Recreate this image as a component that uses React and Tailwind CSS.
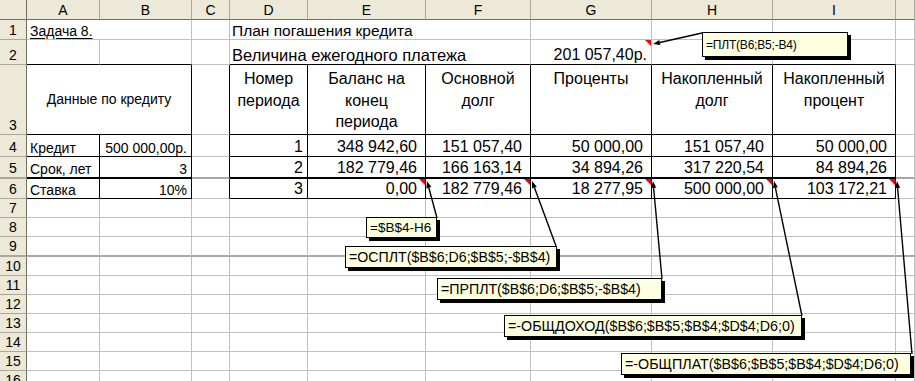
import React from "react";

const RB = { g: "border-r-[#c0c0c0]", k: "border-r-black", n: "border-r-transparent" };
const BB = { g: "border-b-[#c0c0c0]", k: "border-b-black", t: "border-b-[#a8a8a8]" };

function Cell({ r = "g", b = "g", className = "", children }) {
  return (
    <div className={`relative flex whitespace-nowrap border-r border-b ${RB[r]} ${BB[b]} ${className}`}>
      {children}
    </div>
  );
}

function RowHead({ n, className = "" }) {
  return (
    <div className={`flex items-end justify-center bg-[#ece9d8] border-r border-b border-r-[#716f64] border-b-[#aca899] text-[14px] leading-[18px] ${className}`}>
      {n}
    </div>
  );
}

function ColHead({ l }) {
  return (
    <div className="flex items-center justify-center bg-[#ece9d8] border-r border-b border-r-[#aca899] border-b-[#716f64] text-[14px] leading-none">
      {l}
    </div>
  );
}

const num = "items-end justify-end pr-[8px] text-[16px] leading-[18px]";
const ab = "items-end pl-[3px] text-[14px] leading-[16px]";
const abn = "items-end justify-end pr-[4px] text-[14px] leading-[16px]";
const head = "flex-col items-center justify-start pt-[3px] text-[16px] leading-[21.5px] text-center";
const note = "absolute flex items-center pl-[3px] bg-[#ffffe1] border border-black shadow-[3px_3px_0_#000] leading-none whitespace-nowrap";

function Arrow({ x1, y1, x2, y2 }) {
  const dx = x2 - x1;
  const dy = y2 - y1;
  const len = Math.hypot(dx, dy);
  const ux = dx / len;
  const uy = dy / len;
  const bx = x2 - ux * 7;
  const by = y2 - uy * 7;
  const px = -uy * 2.5;
  const py = ux * 2.5;
  return (
    <g>
      <line x1={x1} y1={y1} x2={bx} y2={by} stroke="#000" strokeWidth="1.4" />
      <polygon points={`${x2},${y2} ${bx + px},${by + py} ${bx - px},${by - py}`} fill="#000" />
    </g>
  );
}

const marks = [
  [651, 40],
  [425, 179],
  [530, 179],
  [651, 179],
  [772, 179],
  [895, 179],
];

const emptyRows = [7, 8, 9, 10, 11, 12, 13, 14, 15, 16];

export default function App() {
  return (
    <div className="relative w-[915px] h-[381px] overflow-hidden bg-white text-black font-['Liberation_Sans',Arial,sans-serif]">
      <div className="grid grid-cols-[27px_73px_92px_38px_78px_118px_105px_121px_121px_123px_1fr] grid-rows-[20px_20px_25px_70px_22px_22px_20px_19px_19px_20px_19px_19px_19px_19px_19px_19px_19px]">
        {/* column headers */}
        <div className="bg-[#ece9d8] border-r border-b border-r-[#716f64] border-b-[#716f64]" />
        {["A", "B", "C", "D", "E", "F", "G", "H", "I", ""].map((l, i) => (
          <ColHead key={i} l={l} />
        ))}

        {/* row 1 */}
        <RowHead n="1" />
        <Cell className={`col-span-2 ${ab}`}>
          <span className="underline underline-offset-2">Задача 8.</span>
        </Cell>
        <Cell />
        <Cell className="col-span-3 items-end pl-[2px] text-[15.5px] leading-[16px]">План погашения кредита</Cell>
        <Cell />
        <Cell />
        <Cell />
        <Cell />

        {/* row 2 */}
        <RowHead n="2" />
        <Cell b="k" />
        <Cell b="k" />
        <Cell />
        <Cell b="k" className="col-span-3 items-end pl-[2px] text-[16.5px] leading-[18px]">
          Величина ежегодного платежа
        </Cell>
        <Cell b="k" className="items-end justify-end pr-[4px] text-[16px] leading-[18px]">
          201 057,40р.
        </Cell>
        <Cell b="k" />
        <Cell b="k" />
        <Cell />

        {/* row 3 */}
        <RowHead n="3" />
        <Cell r="k" b="k" className="col-span-2 items-center justify-center text-[14px]">
          Данные по кредиту
        </Cell>
        <Cell r="k" />
        <Cell r="k" b="k" className={head}>
          <span>Номер</span>
          <span>периода</span>
        </Cell>
        <Cell r="k" b="k" className={head}>
          <span>Баланс на</span>
          <span>конец</span>
          <span>периода</span>
        </Cell>
        <Cell r="k" b="k" className={head}>
          <span>Основной</span>
          <span>долг</span>
        </Cell>
        <Cell r="k" b="k" className={head}>
          <span>Проценты</span>
        </Cell>
        <Cell r="k" b="k" className={head}>
          <span>Накопленный</span>
          <span>долг</span>
        </Cell>
        <Cell r="k" b="k" className={head}>
          <span>Накопленный</span>
          <span>процент</span>
        </Cell>
        <Cell />

        {/* row 4 */}
        <RowHead n="4" />
        <Cell r="k" b="k" className={ab}>Кредит</Cell>
        <Cell r="k" b="k" className={abn}>500 000,00р.</Cell>
        <Cell r="k" />
        <Cell r="k" b="k" className="items-end justify-end pr-[4px] text-[16px] leading-[18px]">1</Cell>
        <Cell r="k" b="k" className={num}>348 942,60</Cell>
        <Cell r="k" b="k" className={num}>151 057,40</Cell>
        <Cell r="k" b="k" className={num}>50 000,00</Cell>
        <Cell r="k" b="k" className={num}>151 057,40</Cell>
        <Cell r="k" b="k" className={num}>50 000,00</Cell>
        <Cell />

        {/* row 5 */}
        <RowHead n="5" className="border-b-2" />
        <Cell r="k" b="k" className={`border-b-2 ${ab}`}>Срок, лет</Cell>
        <Cell r="k" b="k" className={`border-b-2 ${abn}`}>3</Cell>
        <Cell r="k" b="t" className="border-b-2" />
        <Cell r="k" b="k" className="border-b-2 items-end justify-end pr-[4px] text-[16px] leading-[18px]">2</Cell>
        <Cell r="k" b="k" className={`border-b-2 ${num}`}>182 779,46</Cell>
        <Cell r="k" b="k" className={`border-b-2 ${num}`}>166 163,14</Cell>
        <Cell r="k" b="k" className={`border-b-2 ${num}`}>34 894,26</Cell>
        <Cell r="k" b="k" className={`border-b-2 ${num}`}>317 220,54</Cell>
        <Cell r="k" b="k" className={`border-b-2 ${num}`}>84 894,26</Cell>
        <Cell b="t" className="border-b-2" />

        {/* row 6 */}
        <RowHead n="6" />
        <Cell r="k" b="k" className={ab}>Ставка</Cell>
        <Cell r="k" b="k" className={abn}>10%</Cell>
        <Cell r="k" />
        <Cell r="k" b="k" className="items-end justify-end pr-[4px] text-[16px] leading-[18px]">3</Cell>
        <Cell r="k" b="k" className={num}>0,00</Cell>
        <Cell r="k" b="k" className={num}>182 779,46</Cell>
        <Cell r="k" b="k" className={num}>18 277,95</Cell>
        <Cell r="k" b="k" className={num}>500 000,00</Cell>
        <Cell r="k" b="k" className={num}>103 172,21</Cell>
        <Cell />

        {/* empty rows */}
        {emptyRows.map((n) => (
          <React.Fragment key={n}>
            <RowHead n={String(n)} className={n === 9 ? "border-b-2 border-b-[#716f64]" : ""} />
            {Array.from({ length: 10 }).map((_, i) =>
              n === 9 ? <Cell key={i} b="t" className="border-b-2" /> : <Cell key={i} />
            )}
          </React.Fragment>
        ))}
      </div>

      {/* comment indicators and arrows */}
      <svg className="absolute left-0 top-0 pointer-events-none" width="915" height="381">
        {marks.map(([x, y], i) => (
          <polygon key={i} points={`${x - 6},${y} ${x},${y} ${x},${y + 6}`} fill="#ff0000" />
        ))}
        <Arrow x1={702} y1={33} x2={653} y2={44} />
        <Arrow x1={437} y1={218} x2={427} y2={181} />
        <Arrow x1={556} y1={246} x2={532} y2={181} />
        <Arrow x1={662} y1={279} x2={653} y2={181} />
        <Arrow x1={802} y1={316} x2={774} y2={181} />
        <Arrow x1={912} y1={354} x2={897} y2={181} />
      </svg>

      {/* comments */}
      <div className={`${note} left-[702px] top-[32px] w-[146px] h-[25px] text-[12px] tracking-[-0.2px]`}>
        =ПЛТ(B6;B5;-B4)
      </div>
      <div className={`${note} left-[366px] top-[217px] w-[71px] h-[21px] text-[13.5px]`}>
        =$B$4-H6
      </div>
      <div className={`${note} left-[345px] top-[246px] w-[212px] h-[22px] text-[14.2px]`}>
        =ОСПЛТ($B$6;D6;$B$5;-$B$4)
      </div>
      <div className={`${note} left-[437px] top-[278px] w-[225px] h-[22px] text-[14.2px]`}>
        =ПРПЛТ($B$6;D6;$B$5;-$B$4)
      </div>
      <div className={`${note} left-[504px] top-[315px] w-[298px] h-[22px] text-[14.3px]`}>
        =-ОБЩДОХОД($B$6;$B$5;$B$4;$D$4;D6;0)
      </div>
      <div className={`${note} left-[621px] top-[353px] w-[290px] h-[22px] text-[14.3px]`}>
        =-ОБЩПЛАТ($B$6;$B$5;$B$4;$D$4;D6;0)
      </div>
    </div>
  );
}
